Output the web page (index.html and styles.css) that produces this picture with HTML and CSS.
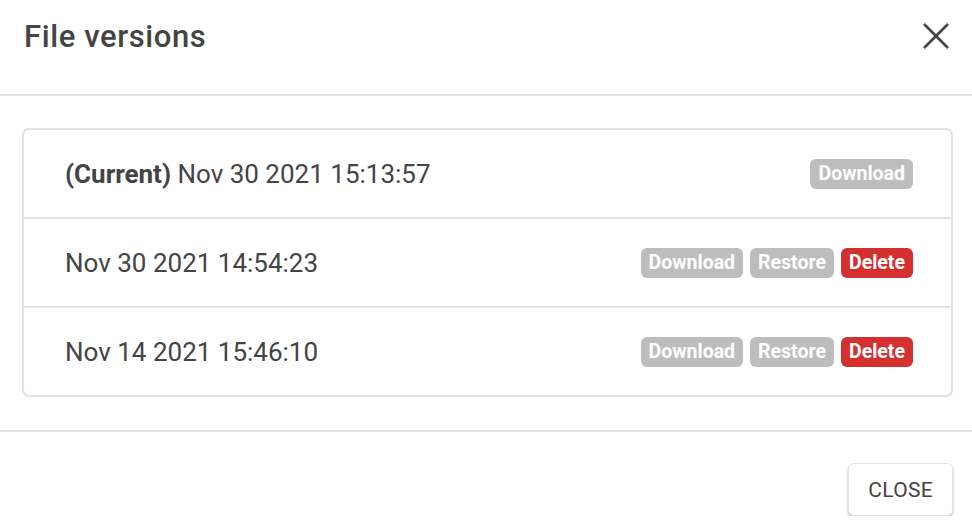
FILE: index.html
```html
<!DOCTYPE html>
<html>
<head>
    <title>File versions</title>
    <link rel="stylesheet" href="styles.css">
</head>
<body>
    <div class="dialog">
        <div class="dialog-header">
            <h1 class="dialog-title">File versions</h1>
            <button class="icon-close" aria-label="Close">
                <svg width="28" height="28" viewBox="0 0 28 28">
                    <path d="M2 2 L26 26 M26 2 L2 26" stroke="#444" stroke-width="2.6" fill="none"/>
                </svg>
            </button>
        </div>

        <div class="dialog-body">
            <div class="version-list">
                <div class="version-row">
                    <span class="version-date"><b>(Current)</b> Nov 30 2021 15:13:57</span>
                    <div class="version-actions">
                        <span class="badge">Download</span>
                    </div>
                </div>
                <div class="version-row">
                    <span class="version-date">Nov 30 2021 14:54:23</span>
                    <div class="version-actions">
                        <span class="badge">Download</span>
                        <span class="badge">Restore</span>
                        <span class="badge badge-danger">Delete</span>
                    </div>
                </div>
                <div class="version-row">
                    <span class="version-date">Nov 14 2021 15:46:10</span>
                    <div class="version-actions">
                        <span class="badge">Download</span>
                        <span class="badge">Restore</span>
                        <span class="badge badge-danger">Delete</span>
                    </div>
                </div>
            </div>
        </div>

        <div class="dialog-footer">
            <button class="btn-close">CLOSE</button>
        </div>
    </div>
</body>
</html>
```

FILE: styles.css
```css
body {
    margin: 0;
    background: #fff;
    font-family: Roboto, "Liberation Sans", sans-serif;
    color: #444;
}

.dialog-header {
    height: 96px;
    box-sizing: border-box;
    padding: 19px 22px 0 24px;
    display: flex;
    justify-content: space-between;
    align-items: flex-start;
    border-bottom: 2px solid #e2e2e2;
}

.dialog-title {
    margin: 0;
    font-size: 31px;
    font-weight: 500;
    line-height: 36px;
    letter-spacing: 0.6px;
    color: #444;
}

.icon-close {
    margin-top: 3px;
    padding: 0;
    border: none;
    background: none;
    width: 28px;
    height: 28px;
    cursor: pointer;
}

.icon-close svg {
    display: block;
}

.dialog-body {
    padding: 32px 19px 33px 22px;
}

.version-list {
    border: 2px solid #e2e2e2;
    border-radius: 7px;
}

.version-row {
    height: 87px;
    padding: 0 38px 0 41px;
    display: flex;
    align-items: center;
    justify-content: space-between;
}

.version-row + .version-row {
    border-top: 2px solid #e2e2e2;
}

.version-date {
    font-size: 26px;
    color: #444;
}

.version-date b {
    font-weight: 700;
}

.version-actions {
    display: flex;
    gap: 7px;
}

.badge {
    height: 30px;
    line-height: 30px;
    padding: 0 8px;
    border-radius: 6px;
    background-color: #bdbdbd;
    color: #fff;
    font-size: 19.5px;
    font-weight: 700;
}

.badge-danger {
    background-color: #d3302f;
}

.dialog-footer {
    border-top: 2px solid #e2e2e2;
    padding: 31px 19px 0 0;
    display: flex;
    justify-content: flex-end;
}

.btn-close {
    height: 53px;
    padding: 0 19px;
    background: #fff;
    border: 1px solid #e4e4e4;
    border-radius: 6px;
    box-shadow: 0 2px 3px rgba(0, 0, 0, 0.25);
    font-family: Roboto, "Liberation Sans", sans-serif;
    font-size: 21px;
    color: #424242;
    letter-spacing: 0.3px;
    cursor: pointer;
}
```
